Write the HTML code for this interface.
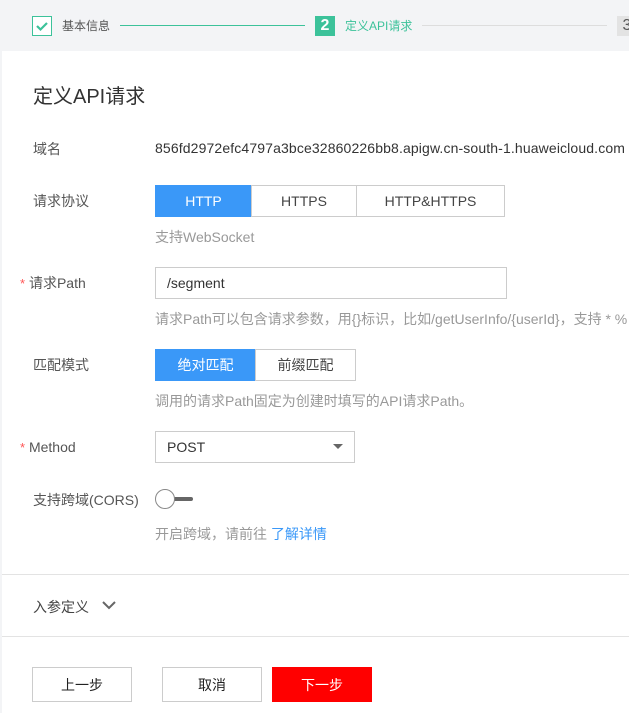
<!DOCTYPE html>
<html><head><meta charset="utf-8"><style>
*{margin:0;padding:0;box-sizing:border-box}
body{width:629px;height:713px;overflow:hidden;background:#f3f4f6;font-family:"Liberation Sans","Noto Sans CJK SC",sans-serif;position:relative}
.a{position:absolute;white-space:nowrap}
.panel{position:absolute;left:2px;top:51px;width:627px;height:662px;background:#fff}
.lbl{font-size:14px;color:#555;line-height:16px}
.hint{font-size:14px;color:#999;line-height:16px}
.star{color:#f55;font-size:13px}
.btn{position:absolute;border:1px solid #ccc;background:#fff;font-size:14px;color:#444;display:flex;align-items:center;justify-content:center}
.on{background:#3a98f8;border-color:#3a98f8;color:#fff}
</style></head><body>
<div class="a" style="left:32px;top:16px;width:20px;height:20px;border:1px solid #3cc29a;background:#fff"></div>
<svg class="a" style="left:35px;top:19px" width="14" height="14"><path d="M2 7 L5.5 10.5 L12 4" stroke="#3cc29a" stroke-width="2.2" fill="none"/></svg>
<div class="a" style="left:62px;top:18px;font-size:12px;color:#555;line-height:16px">基本信息</div>
<div class="a" style="left:120px;top:25px;width:185px;height:1px;background:#3cc29a"></div>
<div class="a" style="left:315px;top:16px;width:20px;height:20px;background:#3cc29a;color:#fff;font-size:16px;font-weight:bold;text-align:center;line-height:20px">2</div>
<div class="a" style="left:345px;top:18px;font-size:12px;color:#3cc29a;line-height:16px">定义API请求</div>
<div class="a" style="left:422px;top:25px;width:185px;height:1px;background:#ddd"></div>
<div class="a" style="left:617px;top:16px;width:20px;height:20px;background:#e3e3e3;color:#555;font-size:16px;text-align:center;line-height:20px">3</div>
<div class="panel"></div>
<div class="a" style="left:33px;top:80px;font-size:20px;color:#333">定义API请求</div>
<div class="a lbl" style="left:33px;top:141px">域名</div>
<div class="a" style="left:155px;top:140px;font-size:14px;color:#333;letter-spacing:0.13px">856fd2972efc4797a3bce32860226bb8.apigw.cn-south-1.huaweicloud.com</div>
<div class="a lbl" style="left:33px;top:193px">请求协议</div>
<div class="btn on" style="left:155px;top:185px;width:97px;height:32px">HTTP</div>
<div class="btn" style="left:251px;top:185px;width:106px;height:32px">HTTPS</div>
<div class="btn" style="left:356px;top:185px;width:149px;height:32px">HTTP&amp;HTTPS</div>
<div class="a hint" style="left:155px;top:229px">支持WebSocket</div>
<div class="a lbl" style="left:20px;top:275px"><span class="star">*</span> 请求Path</div>
<div class="btn" style="left:155px;top:267px;width:352px;height:32px;justify-content:flex-start;padding-left:11px;color:#333">/segment</div>
<div class="a hint" style="left:155px;top:311px">请求Path可以包含请求参数，用{}标识，比如/getUserInfo/{userId}，支持 * %</div>
<div class="a lbl" style="left:33px;top:357px">匹配模式</div>
<div class="btn on" style="left:155px;top:349px;width:101px;height:32px">绝对匹配</div>
<div class="btn" style="left:255px;top:349px;width:101px;height:32px">前缀匹配</div>
<div class="a hint" style="left:155px;top:393px">调用的请求Path固定为创建时填写的API请求Path。</div>
<div class="a lbl" style="left:20px;top:439px"><span class="star">*</span> Method</div>
<div class="btn" style="left:155px;top:431px;width:200px;height:32px;justify-content:flex-start;padding-left:11px;color:#333">POST</div>
<svg class="a" style="left:332px;top:443px" width="12" height="8"><path d="M1 1 L11 1 L6 6 Z" fill="#666"/></svg>
<div class="a lbl" style="left:33px;top:492px">支持跨域(CORS)</div>
<div class="a" style="left:170px;top:497px;width:23px;height:4px;background:#666;border-radius:2px"></div>
<div class="a" style="left:155px;top:489px;width:20px;height:20px;border:1px solid #888;border-radius:50%;background:#fff"></div>
<div class="a hint" style="left:155px;top:526px">开启跨域，请前往 <span style="color:#3a98f8">了解详情</span></div>
<div class="a" style="left:2px;top:574px;width:627px;height:1px;background:#e3e3e3"></div>
<div class="a lbl" style="left:33px;top:599px;color:#444">入参定义</div>
<svg class="a" style="left:101px;top:600px" width="16" height="10"><path d="M2 2 L8 8 L14 2" stroke="#666" stroke-width="2" fill="none"/></svg>
<div class="a" style="left:2px;top:636px;width:627px;height:1px;background:#e3e3e3"></div>
<div class="btn" style="left:32px;top:667px;width:100px;height:35px;color:#222">上一步</div>
<div class="btn" style="left:162px;top:667px;width:100px;height:35px;color:#222">取消</div>
<div class="btn" style="left:272px;top:667px;width:100px;height:35px;background:#f00;border-color:#f00;color:#fff">下一步</div>
</body></html>
